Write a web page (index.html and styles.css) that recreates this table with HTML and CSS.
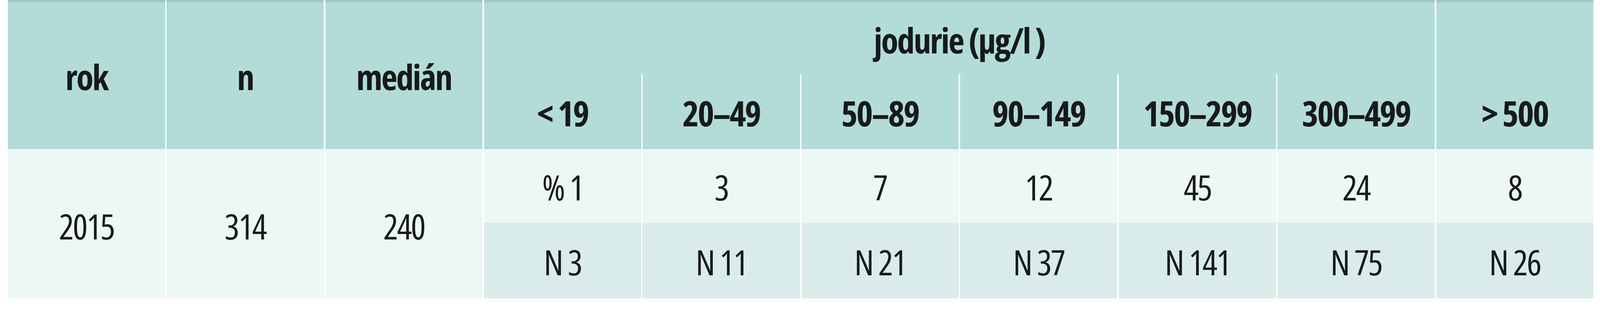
FILE: index.html
```html
<!DOCTYPE html>
<html lang="cs">
<head>
<meta charset="utf-8">
<title>Jodurie</title>
<link rel="stylesheet" href="styles.css">
</head>
<body>
<div class="table">
  <div class="hd main c1">rok</div>
  <div class="hd main c2">n</div>
  <div class="hd main c3">medián</div>
  <div class="hd group">jodurie (µg/l )</div>
  <div class="hd corner"></div>

  <div class="sub">&lt; 19</div>
  <div class="sub">20–49</div>
  <div class="sub">50–89</div>
  <div class="sub">90–149</div>
  <div class="sub">150–299</div>
  <div class="sub">300–499</div>
  <div class="sub">&gt; 500</div>

  <div class="tall c1">2015</div>
  <div class="tall c2">314</div>
  <div class="tall c3">240</div>

  <div class="r1">% 1</div>
  <div class="r1">3</div>
  <div class="r1">7</div>
  <div class="r1">12</div>
  <div class="r1">45</div>
  <div class="r1">24</div>
  <div class="r1">8</div>

  <div class="r2">N 3</div>
  <div class="r2">N 11</div>
  <div class="r2">N 21</div>
  <div class="r2">N 37</div>
  <div class="r2">N 141</div>
  <div class="r2">N 75</div>
  <div class="r2">N 26</div>
</div>
</body>
</html>
```

FILE: styles.css
```css
html, body {
  margin: 0;
  padding: 0;
  background: #ffffff;
}

body {
  font-family: "Open Sans", "Noto Sans", sans-serif;
  color: #161a1a;
}

.table {
  display: grid;
  margin: 0 0.409vw 0 0.494vw;
  grid-template-columns: repeat(10, 1fr);
  grid-template-rows: 190px 192px 189px 194px;
  column-gap: 0.09vw;
  font-size: 90px;
  line-height: 1;
  font-stretch: 75%;
  letter-spacing: -3px;
}

.table > div {
  display: flex;
  align-items: center;
  justify-content: center;
  box-sizing: border-box;
  white-space: nowrap;
}

.hd {
  background: #b3dcd8;
  border-top: 6px solid #a0c6c4;
  font-weight: 700;
}

.main {
  grid-row: 1 / span 2;
  padding-top: 4px;
}

.c1 { grid-column: 1; }
.c2 { grid-column: 2; }
.c3 { grid-column: 3; }

.group {
  grid-column: 4 / span 6;
  grid-row: 1;
  padding-top: 8px;
}

.corner {
  grid-column: 10;
  grid-row: 1;
}

.sub {
  grid-row: 2;
  background: #b3dcd8;
  font-weight: 700;
  padding-top: 10px;
  border-bottom: 4px solid #aed5d1;
}

.tall {
  grid-row: 3 / span 2;
  background: #edf7f5;
  padding-top: 10px;
}

.r1 {
  grid-row: 3;
  background: #edf7f5;
  padding-top: 4px;
}

.r2 {
  grid-row: 4;
  background: #d9ecea;
  padding-top: 6px;
}
```
